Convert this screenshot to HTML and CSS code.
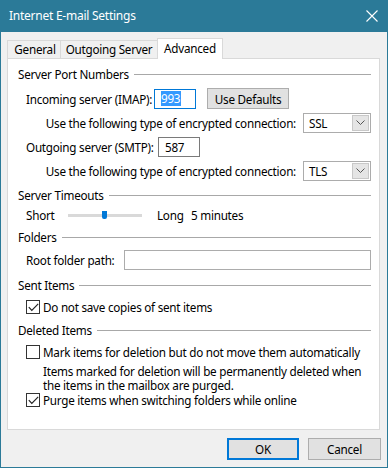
FILE: index.html
```html
<!DOCTYPE html>
<html lang="en">
<head>
    <meta charset="UTF-8">
    <title>Internet E-mail Settings</title>
    <link rel="stylesheet" href="styles.css">
</head>
<body>
    <div class="window">
        <div class="titlebar">
            <span class="title">Internet E-mail Settings</span>
            <svg class="close" width="12" height="12" viewBox="0 0 12 12">
                <path d="M0.5 0.5 L11.5 11.5 M11.5 0.5 L0.5 11.5" stroke="#fff" stroke-width="1.1"/>
            </svg>
        </div>

        <div class="tabs">
            <div class="tab tab-general">General</div>
            <div class="tab tab-outgoing">Outgoing Server</div>
            <div class="tab active">Advanced</div>
        </div>

        <div class="panel">
            <div class="group-head first"><span>Server Port Numbers</span></div>
            <div class="row port-row">
                <label class="lbl lbl-in">Incoming server (IMAP):</label>
                <div class="textbox port focus"><span class="sel">993</span></div>
                <button class="btn defaults">Use Defaults</button>
            </div>
            <div class="row enc-row">
                <label>Use the following type of encrypted connection:</label>
                <div class="combo"><span>SSL</span><span class="arrow"><svg width="9" height="6" viewBox="0 0 9 6"><path d="M0.5 0.5 L4.5 4.5 L8.5 0.5" fill="none" stroke="#555" stroke-width="1"/></svg></span></div>
            </div>
            <div class="row port-row smtp">
                <label class="lbl lbl-out">Outgoing server (SMTP):</label>
                <div class="textbox port"><span>587</span></div>
            </div>
            <div class="row enc-row">
                <label>Use the following type of encrypted connection:</label>
                <div class="combo"><span>TLS</span><span class="arrow"><svg width="9" height="6" viewBox="0 0 9 6"><path d="M0.5 0.5 L4.5 4.5 L8.5 0.5" fill="none" stroke="#555" stroke-width="1"/></svg></span></div>
            </div>

            <div class="group-head"><span>Server Timeouts</span></div>
            <div class="row slider-row">
                <span class="short">Short</span>
                <div class="track"><span class="thumb"></span></div>
                <span class="long">Long</span>
                <span>5 minutes</span>
            </div>

            <div class="group-head"><span>Folders</span></div>
            <div class="row root-row">
                <label class="lbl lbl-root">Root folder path:</label>
                <div class="textbox wide"></div>
            </div>

            <div class="group-head sent"><span>Sent Items</span></div>
            <div class="row check-row">
                <span class="check checked"><svg width="11" height="9" viewBox="0 0 11 9"><path d="M0.8 4.2 L3.8 7.4 L10.2 0.8" fill="none" stroke="#222" stroke-width="1.2"/></svg></span>
                <span>Do not save copies of sent items</span>
            </div>

            <div class="group-head deleted"><span>Deleted Items</span></div>
            <div class="row check-row">
                <span class="check"></span>
                <span>Mark items for deletion but do not move them automatically</span>
            </div>
            <p class="note">Items marked for deletion will be permanently deleted when<br>the items in the mailbox are purged.</p>
            <div class="row check-row purge">
                <span class="check checked"><svg width="11" height="9" viewBox="0 0 11 9"><path d="M0.8 4.2 L3.8 7.4 L10.2 0.8" fill="none" stroke="#222" stroke-width="1.2"/></svg></span>
                <span>Purge items when switching folders while online</span>
            </div>
        </div>

        <div class="footer">
            <button class="btn ok">OK</button>
            <button class="btn cancel">Cancel</button>
        </div>
    </div>
</body>
</html>
```

FILE: styles.css
```css
* {
    box-sizing: border-box;
}
body {
    margin: 0;
    font-family: "Noto Sans", "Open Sans", sans-serif;
    font-size: 11.7px;
    letter-spacing: -0.25px;
    color: #000;
    white-space: nowrap;
}
.window {
    width: 388px;
    height: 468px;
    border: 1px solid #2b7a98;
    border-top: none;
    background-color: #f0f0f0;
}
.titlebar {
    height: 32px;
    margin: 0 -1px;
    background-color: #2b7a98;
    color: #fff;
    display: flex;
    align-items: center;
    justify-content: space-between;
    padding: 0 10px 2px 9px;
}
.title {
    font-size: 12px;
}
.close {
    margin-top: 1px;
}
.tabs {
    display: flex;
    align-items: flex-end;
    height: 26px;
    padding-left: 6px;
}
.tab {
    height: 18px;
    line-height: 17px;
    text-align: center;
    border: 1px solid #d9d9d9;
    border-bottom: none;
    border-right: none;
    background-color: #f0f0f0;
}
.tab-general {
    width: 53px;
    padding-left: 2px;
}
.tab-outgoing {
    width: 97px;
}
.tab.active {
    width: 66px;
    height: 21px;
    line-height: 18px;
    background-color: #fff;
    border-right: 1px solid #d9d9d9;
    margin-bottom: -1px;
    position: relative;
    z-index: 1;
}
.panel {
    margin-left: 6px;
    width: 373px;
    height: 372px;
    background-color: #fff;
    border: 1px solid #d9d9d9;
    padding: 0 8px 0 10px;
}
.group-head {
    display: flex;
    align-items: center;
    height: 16px;
    margin-top: 6px;
}
.group-head.first {
    margin-top: 7px;
}
.group-head.sent,
.group-head.deleted {
    margin-top: 7px;
}
.group-head::after {
    content: "";
    flex: 1;
    height: 1px;
    background-color: #a8a8a8;
    margin-left: 5px;
}
.row {
    display: flex;
    align-items: center;
    padding-left: 8px;
}
.lbl,
.row > span,
.row > label {
    flex-shrink: 0;
}
.port-row {
    height: 21px;
    margin-top: 6px;
}
.port-row.smtp {
    margin-top: 4px;
    height: 20px;
}
.lbl-in {
    width: 128px;
}
.lbl-out {
    width: 132px;
}
.textbox {
    height: 20px;
    border: 1px solid #7a7a7a;
    background-color: #fff;
    display: flex;
    align-items: center;
    padding-left: 6px;
}
.port {
    width: 42px;
}
.port.focus {
    border-color: #0078d7;
}
.sel {
    background-color: #3399ff;
    color: #fff;
    line-height: 15px;
    padding: 0 1px 0 0;
}
.btn {
    font-family: inherit;
    font-size: 11.7px;
    letter-spacing: -0.25px;
    color: #000;
    background-color: #e1e1e1;
    border: 1px solid #adadad;
    padding: 0;
}
.defaults {
    width: 82px;
    height: 21px;
    margin-left: 11px;
}
.enc-row {
    justify-content: flex-end;
    height: 20px;
    margin-top: 4px;
}
.enc-row label {
    margin-right: 7px;
}
.combo {
    width: 68px;
    height: 20px;
    border: 1px solid #acacac;
    display: flex;
    align-items: center;
    justify-content: space-between;
    padding: 1px 1px 1px 5px;
}
.arrow {
    width: 17px;
    height: 100%;
    background-color: #e5e5e5;
    border: 1px solid #c8c8c8;
    display: flex;
    align-items: center;
    justify-content: center;
}
.slider-row {
    height: 16px;
    margin-top: 4px;
}
.short {
    width: 42px;
}
.track {
    width: 74px;
    height: 3px;
    background-color: #d9d9d9;
    position: relative;
    margin-right: 15px;
}
.thumb {
    position: absolute;
    left: 34px;
    top: -3px;
    width: 5px;
    height: 8px;
    background-color: #0078d7;
    border-radius: 0 0 2px 2px;
}
.long {
    width: 34px;
}
.root-row {
    height: 20px;
    margin-top: 5px;
}
.lbl-root {
    width: 98px;
}
.wide {
    width: 247px;
    border-color: #acacac;
}
.check-row {
    height: 16px;
    margin-top: 6px;
}
.check {
    width: 14px;
    height: 14px;
    border: 1px solid #333;
    margin-right: 3px;
    display: flex;
    align-items: center;
    justify-content: center;
}
.note {
    margin: 4px 0 0 25px;
    line-height: 14px;
}
.check-row.purge {
    margin-top: 0;
}
.footer {
    display: flex;
    justify-content: flex-end;
    gap: 9px;
    padding: 8px 6px 0 0;
}
.ok {
    width: 72px;
    height: 22px;
    border: 2px solid #0078d7;
}
.cancel {
    width: 73px;
    height: 22px;
}
```
